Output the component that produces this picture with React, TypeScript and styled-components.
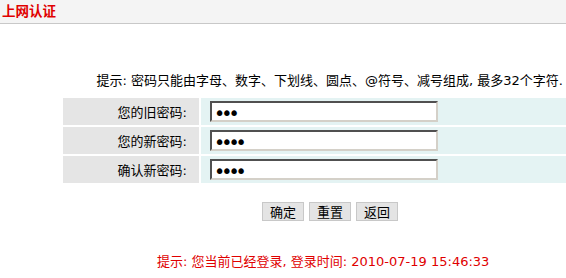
import React from 'react';
import styled, { createGlobalStyle } from 'styled-components';

const GlobalStyle = createGlobalStyle({
  'html, body': {
    margin: 0,
    padding: 0,
    background: '#ffffff',
  },
  body: {
    fontFamily: '"DejaVu Sans", "Noto Sans CJK SC", sans-serif',
    fontSize: '13px',
    color: '#000000',
  },
});

const Page = styled.div({
  width: '566px',
  height: '278px',
  overflow: 'hidden',
  display: 'flex',
  flexDirection: 'column',
});

const Header = styled.header({
  flexShrink: 0,
  height: '23px',
  background: '#f4f4f4',
  borderBottom: '1px solid #c8c8c8',
  padding: '0 2px',
  boxSizing: 'content-box',
});

const Title = styled.h1({
  margin: 0,
  fontFamily: '"Noto Sans CJK SC", sans-serif',
  fontSize: '13.5px',
  lineHeight: '20px',
  fontWeight: 'bold',
  color: '#e00000',
});

const Panel = styled.main({
  paddingLeft: '63px',
  display: 'flex',
  flexDirection: 'column',
});

const Hint = styled.p({
  margin: '49px 0 9px',
  paddingRight: '3px',
  textAlign: 'right',
  lineHeight: '16px',
  whiteSpace: 'nowrap',
});

const Form = styled.form({
  display: 'grid',
  gridTemplateColumns: '136px 1fr',
  gridAutoRows: '27px',
  gap: '2px',
});

const Label = styled.label({
  background: '#e5e5e5',
  display: 'flex',
  alignItems: 'center',
  justifyContent: 'flex-end',
  paddingRight: '12px',
});

const Field = styled.div({
  background: '#e4f3f3',
  display: 'flex',
  alignItems: 'center',
  paddingLeft: '9px',
});

const Input = styled.input({
  boxSizing: 'border-box',
  width: '228px',
  height: '21px',
  margin: 0,
  padding: '2px 2px 0',
  background: '#ffffff',
  borderStyle: 'solid',
  borderWidth: '2px',
  borderColor: '#505050 #d4d0c8 #d4d0c8 #505050',
  fontFamily: '"DejaVu Sans", sans-serif',
  fontSize: '19px',
  letterSpacing: '-4px',
  outline: 'none',
});

const ButtonBar = styled.div({
  display: 'flex',
  gap: '5px',
  padding: '19px 0 0 262px',
});

const Button = styled.button({
  height: '19px',
  padding: '0 7px',
  background: '#e4e4e4',
  border: '1px solid #c8c8c8',
  fontFamily: '"Noto Sans CJK SC", sans-serif',
  fontSize: '13px',
  lineHeight: '17px',
  color: '#000000',
});

const Status = styled.p({
  margin: '33px 0 0 157px',
  lineHeight: '16px',
  color: '#e00000',
  whiteSpace: 'nowrap',
});

const fields = [
  { label: '您的旧密码:', value: 'abc' },
  { label: '您的新密码:', value: 'abcd' },
  { label: '确认新密码:', value: 'abcd' },
];

export default function App() {
  return (
    <Page>
      <GlobalStyle />
      <Header>
        <Title>上网认证</Title>
      </Header>
      <Panel>
        <Hint>提示: 密码只能由字母、数字、下划线、圆点、@符号、减号组成, 最多32个字符.</Hint>
        <Form>
          {fields.map((f) => (
            <React.Fragment key={f.label}>
              <Label>{f.label}</Label>
              <Field>
                <Input type="password" defaultValue={f.value} />
              </Field>
            </React.Fragment>
          ))}
        </Form>
      </Panel>
      <ButtonBar>
        <Button type="button">确定</Button>
        <Button type="button">重置</Button>
        <Button type="button">返回</Button>
      </ButtonBar>
      <Status>提示: 您当前已经登录, 登录时间: 2010-07-19 15:46:33</Status>
    </Page>
  );
}
